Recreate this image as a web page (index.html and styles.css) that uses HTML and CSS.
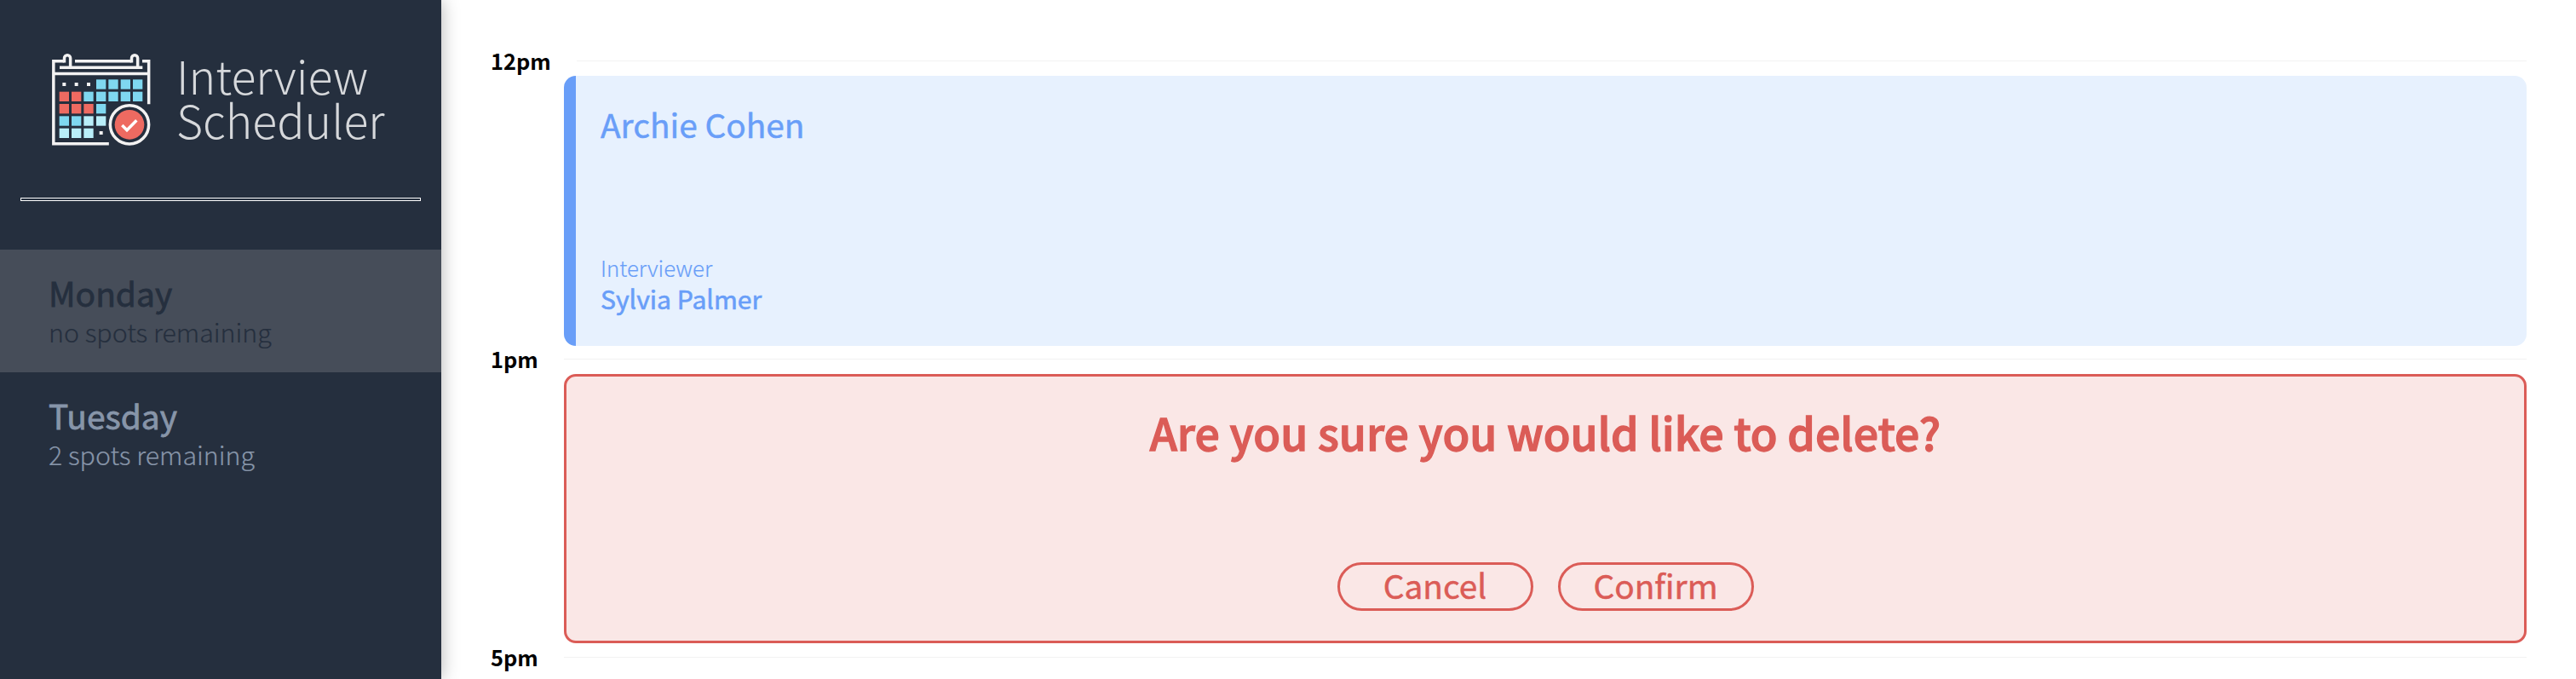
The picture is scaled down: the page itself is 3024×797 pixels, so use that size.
FILE: index.html
```html
<!DOCTYPE html>
<html lang="en">
<head>
<meta charset="utf-8">
<title>Interview Scheduler</title>
<link rel="stylesheet" href="styles.css">
</head>
<body>
<main class="layout">
  <section class="sidebar">
    <div class="logo">
      <svg class="logo-icon" viewBox="0 0 420 375" aria-hidden="true">
        <g fill="none" stroke="#f3f2f2" stroke-width="10.5">
          <path d="M76 50.500H38.500V341.500H233.500"/>
          <path d="M114 50.500H313"/>
          <path d="M351 50.500H374V202"/>
          <path d="M38 94.500H374"/>
          <path d="M60 72.500H352"/>
          <path d="M76.500 55.500V40a10.700 10.700 0 0 1 21.400 0V72"/>
          <path d="M313.500 55.500V40a10.700 10.700 0 0 1 21.400 0V72"/>
          <circle cx="306" cy="274" r="68"/>
        </g>
        <circle cx="306" cy="274" r="52" fill="#ee6a61"/>
        <path d="M280 276L297 293L331 259" fill="none" stroke="#fff" stroke-width="10.500"/>
        <g fill="#f3f2f2">
          <rect x="70" y="126" width="12" height="12"/><rect x="113" y="126" width="12" height="12"/><rect x="156" y="126" width="12" height="12"/><rect x="200" y="297" width="12" height="12"/>
        </g>
        <g fill="#7fd8f0">
          <rect x="189" y="115" width="34" height="34"/><rect x="232" y="115" width="34" height="34"/><rect x="275" y="115" width="34" height="34"/><rect x="318" y="115" width="34" height="34"/>
          <rect x="145" y="158" width="34" height="34"/><rect x="189" y="158" width="34" height="34"/><rect x="232" y="158" width="34" height="34"/><rect x="275" y="158" width="34" height="34"/><rect x="318" y="158" width="34" height="34"/>
          <rect x="189" y="201" width="34" height="34"/>
          <rect x="59" y="244" width="34" height="34"/><rect x="102" y="244" width="34" height="34"/>
        </g>
        <g fill="#ee6a61">
          <rect x="59" y="158" width="34" height="34"/><rect x="102" y="158" width="34" height="34"/>
          <rect x="59" y="201" width="34" height="34"/><rect x="102" y="201" width="34" height="34"/><rect x="145" y="201" width="34" height="34"/>
        </g>
        <g fill="#b9eef9">
          <rect x="145" y="244" width="34" height="34"/><rect x="189" y="244" width="34" height="34"/>
          <rect x="59" y="287" width="34" height="34"/><rect x="102" y="287" width="34" height="34"/><rect x="145" y="287" width="34" height="34"/>
        </g>
      </svg>
      <p class="logo-text">Interview<br>Scheduler</p>
    </div>
    <hr class="separator">
    <ul class="days">
      <li class="day day--full"><h2 class="day-name">Monday</h2><p class="day-spots">no spots remaining</p></li>
      <li class="day"><h2 class="day-name">Tuesday</h2><p class="day-spots">2 spots remaining</p></li>
    </ul>
  </section>
  <section class="schedule">
    <article class="slot">
      <header class="slot-time"><h4 class="slot-hour">12pm</h4><hr class="slot-line"></header>
      <div class="card card--show">
        <h2 class="student">Archie Cohen</h2>
        <div class="interviewer">
          <h4 class="interviewer-label">Interviewer</h4>
          <h3 class="interviewer-name">Sylvia Palmer</h3>
        </div>
      </div>
    </article>
    <article class="slot">
      <header class="slot-time"><h4 class="slot-hour">1pm</h4><hr class="slot-line"></header>
      <div class="card card--confirm">
        <h1 class="question">Are you sure you would like to delete?</h1>
        <div class="actions">
          <button class="button" type="button">Cancel</button>
          <button class="button" type="button">Confirm</button>
        </div>
      </div>
    </article>
    <article class="slot">
      <header class="slot-time"><h4 class="slot-hour">5pm</h4><hr class="slot-line"></header>
    </article>
  </section>
</main>
</body>
</html>
```
FILE: styles.css
```css
* { box-sizing: border-box; margin: 0; padding: 0; }

body {
  font-family: "Noto Sans CJK JP", "Noto Sans", sans-serif;
  background: #fff;
  color: #000;
}

h1, h2, h3, h4 { font-weight: 400; }

.layout {
  display: flex;
  height: 797px;
  overflow: hidden;
}

/* Sidebar */
.sidebar {
  flex: 0 0 518px;
  height: 797px;
  padding-top: 55px;
  background: #252f3e;
  box-shadow: 0 0 20px rgba(0, 0, 0, 0.3);
}

.logo {
  display: flex;
  gap: 17px;
  height: 125px;
  padding-left: 50px;
}

.logo-icon { width: 140px; height: 125px; }

.logo-text {
  padding-top: 7px;
  font-size: 53.6px;
  font-weight: 300;
  line-height: 52px;
  color: #d6d8db;
}

.separator {
  height: 4px;
  margin: 52px 24px 57px;
  border: 1px solid #fff;
}

.days { list-style: none; }

.day {
  height: 144px;
  padding: 25px 57px;
  color: #8795a9;
}

.day--full {
  background: #464d59;
  color: #252f3e;
}

.day-name { font-size: 38.9px; line-height: 50px; -webkit-text-stroke: 0.8px; }

.day-spots { font-size: 30.3px; font-weight: 300; line-height: 42px; -webkit-text-stroke: 0.2px; }

/* Schedule */
.schedule {
  flex: 1;
  padding: 55px 58px 0 58px;
}

.slot { height: 350px; }

.slot-time {
  display: flex;
  align-items: center;
  gap: 30px;
  height: 32px;
}

.slot-hour { font-size: 25.4px; font-weight: 700; line-height: 32px; }

.slot-line {
  flex: 1;
  height: 1px;
  border: 0;
  background: #f2f2f2;
}

.card {
  display: flex;
  flex-direction: column;
  justify-content: space-between;
  margin: 2px 0 0 86px;
  border-radius: 14px;
}

.card--show {
  height: 317px;
  padding: 31px 30px 37px 29px;
  border-left: 14px solid #699ef8;
  background: #e7f1fe;
  color: #699ef8;
}

.student { font-size: 38.8px; line-height: 50px; -webkit-text-stroke: 0.5px; }
.interviewer-label { font-size: 25.75px; font-weight: 300; line-height: 34px; -webkit-text-stroke: 0.2px; }
.interviewer-name { font-size: 30.1px; line-height: 38px; -webkit-text-stroke: 0.6px; }

.card--confirm {
  align-items: center;
  height: 316px;
  padding: 33px 0 35px;
  border: 3px solid #db5c57;
  background: #fae7e6;
  color: #db5c57;
}

.question {
  font-size: 51.8px;
  font-weight: 500;
  line-height: 64px;
  -webkit-text-stroke: 1.3px;
}

.actions { display: flex; gap: 29px; }

.button {
  width: 230px;
  height: 57px;
  padding-bottom: 5px;
  border: 3px solid #db5c57;
  border-radius: 29px;
  background: transparent;
  color: #db5c57;
  font-family: inherit;
  font-size: 38.8px;
  line-height: 46px;
  -webkit-text-stroke: 0.5px;
}
```
